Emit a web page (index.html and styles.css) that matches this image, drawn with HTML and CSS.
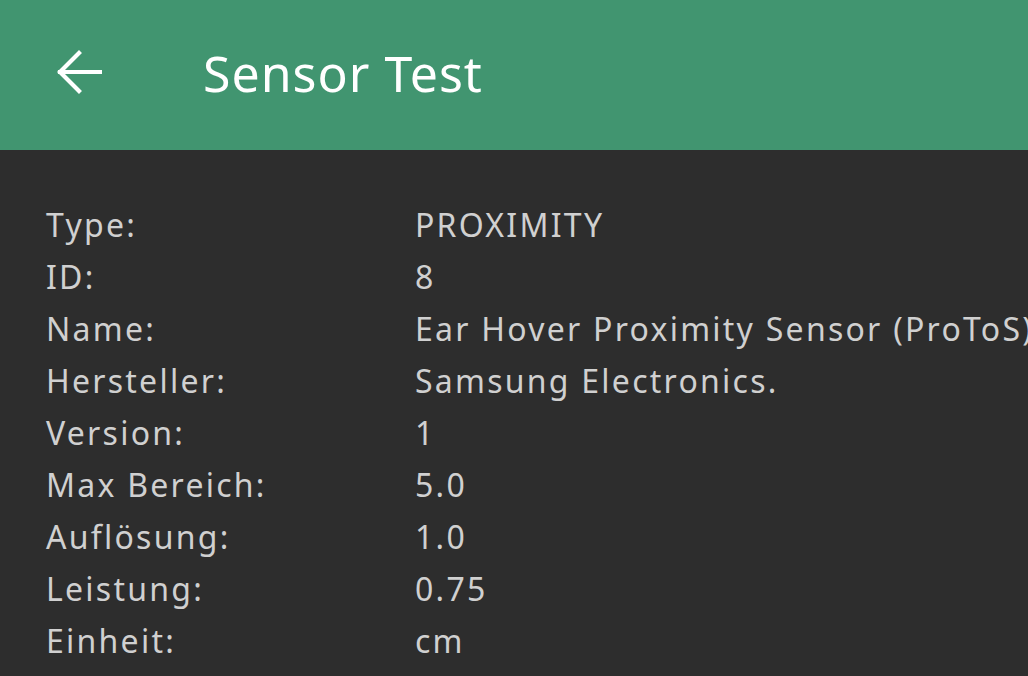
FILE: index.html
```html
<!DOCTYPE html>
<html>

<head>
    <title>Sensor Test</title>
    <link rel="stylesheet" href="styles.css">
</head>

<body>
    <!-- Toolbar -->
    <div class="toolbar">
        <span class="back-icon">
            <svg width="46" height="46" viewBox="0 0 46 46">
                <path d="M4 23 H44 M23 4 L4 23 L23 42" fill="none" stroke="#ffffff" stroke-width="4.2" stroke-linecap="square"/>
            </svg>
        </span>
        <h1 class="title">Sensor Test</h1>
    </div>

    <!-- Sensor details -->
    <div class="details">
        <div class="label">Type:</div>
        <div class="value">PROXIMITY</div>
        <div class="label">ID:</div>
        <div class="value">8</div>
        <div class="label">Name:</div>
        <div class="value">Ear Hover Proximity Sensor (ProToS)</div>
        <div class="label">Hersteller:</div>
        <div class="value">Samsung Electronics.</div>
        <div class="label">Version:</div>
        <div class="value">1</div>
        <div class="label">Max Bereich:</div>
        <div class="value">5.0</div>
        <div class="label">Auflösung:</div>
        <div class="value">1.0</div>
        <div class="label">Leistung:</div>
        <div class="value">0.75</div>
        <div class="label">Einheit:</div>
        <div class="value">cm</div>
    </div>
</body>

</html>
```

FILE: styles.css
```css
body {
    font-family: "Noto Sans", "Open Sans", sans-serif;
    margin: 0;
    background-color: #2d2d2d;
    height: 100vh;
    overflow: hidden;
}

/* Toolbar */
.toolbar {
    height: 150px;
    background-color: #419570;
    display: flex;
    align-items: center;
    padding-left: 56px;
}
.back-icon {
    display: flex;
    width: 46px;
    height: 46px;
    margin-top: -6px;
}
.title {
    margin: -4px 0 0 101px;
    font-size: 50px;
    font-weight: normal;
    letter-spacing: 1px;
    color: #ffffff;
}

/* Details list */
.details {
    display: grid;
    grid-template-columns: 369px auto;
    padding: 49px 0 0 46px;
    font-size: 32px;
    line-height: 52px;
    letter-spacing: 2.25px;
    color: #d0d0d0;
    white-space: nowrap;
}
```
